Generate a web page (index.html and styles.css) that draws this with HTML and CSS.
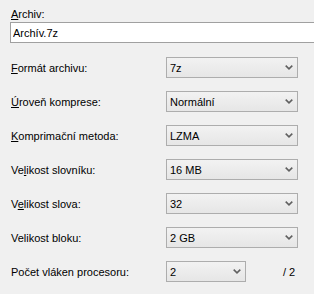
FILE: index.html
```html
<!DOCTYPE html>
<html lang="cs">
<head>
    <meta charset="UTF-8">
    <title>Přidat do archivu</title>
    <link rel="stylesheet" href="styles.css">
</head>
<body>
    <div class="panel">
        <label class="field-label" for="archive"><u>A</u>rchiv:</label>
        <input type="text" id="archive" class="text-input" value="Archív.7z">

        <div class="options">
            <div class="row">
                <span class="label"><u>F</u>ormát archivu:</span>
                <div class="combo"><span>7z</span><svg class="chevron" width="8" height="5" viewBox="0 0 8 5"><path d="M0.7 0.7 L4 3.8 L7.3 0.7" /></svg></div>
            </div>
            <div class="row">
                <span class="label"><u>Ú</u>roveň komprese:</span>
                <div class="combo"><span>Normální</span><svg class="chevron" width="8" height="5" viewBox="0 0 8 5"><path d="M0.7 0.7 L4 3.8 L7.3 0.7" /></svg></div>
            </div>
            <div class="row">
                <span class="label"><u>K</u>omprimační metoda:</span>
                <div class="combo"><span>LZMA</span><svg class="chevron" width="8" height="5" viewBox="0 0 8 5"><path d="M0.7 0.7 L4 3.8 L7.3 0.7" /></svg></div>
            </div>
            <div class="row">
                <span class="label">Ve<u>l</u>ikost slovníku:</span>
                <div class="combo"><span>16 MB</span><svg class="chevron" width="8" height="5" viewBox="0 0 8 5"><path d="M0.7 0.7 L4 3.8 L7.3 0.7" /></svg></div>
            </div>
            <div class="row">
                <span class="label">V<u>e</u>likost slova:</span>
                <div class="combo"><span>32</span><svg class="chevron" width="8" height="5" viewBox="0 0 8 5"><path d="M0.7 0.7 L4 3.8 L7.3 0.7" /></svg></div>
            </div>
            <div class="row">
                <span class="label">Velikost bloku:</span>
                <div class="combo"><span>2 GB</span><svg class="chevron" width="8" height="5" viewBox="0 0 8 5"><path d="M0.7 0.7 L4 3.8 L7.3 0.7" /></svg></div>
            </div>
            <div class="row">
                <span class="label">Počet vláken procesoru:</span>
                <div class="combo combo-small"><span>2</span><svg class="chevron" width="8" height="5" viewBox="0 0 8 5"><path d="M0.7 0.7 L4 3.8 L7.3 0.7" /></svg></div>
                <span class="max-threads">/ 2</span>
            </div>
        </div>
    </div>
</body>
</html>
```

FILE: styles.css
```css
* {
    margin: 0;
    padding: 0;
    box-sizing: border-box;
}

body {
    background-color: #f0f0f0;
    font-family: "Liberation Sans", Arial, sans-serif;
    font-size: 11px;
    color: #000;
}

.panel {
    padding: 8px 0 0 10px;
}

.field-label {
    display: block;
    height: 14px;
    padding-left: 1px;
    line-height: 13px;
}

/* the edit box runs on under the right edge of the window */
.text-input {
    display: block;
    width: 100%;
    height: 21px;
    padding: 0 2px;
    border: 1px solid #a0a0a0;
    border-right: none;
    background: #fff;
    font-family: inherit;
    font-size: 11px;
    color: #000;
    outline: none;
}

.options {
    margin-top: 14px;
}

.row {
    display: flex;
    align-items: center;
    height: 21px;
    margin-bottom: 13px;
}

.label {
    width: 156px;
    padding-left: 1px;
}

.combo {
    display: flex;
    align-items: center;
    justify-content: space-between;
    width: 132px;
    height: 21px;
    padding: 0 4px 0 3px;
    border: 1px solid #adadad;
    background: linear-gradient(#f2f2f2, #e6e6e6);
}

.combo-small {
    width: 80px;
}

.chevron path {
    fill: none;
    stroke: #606060;
    stroke-width: 1.6;
}

.max-threads {
    margin-left: 37px;
}
```
